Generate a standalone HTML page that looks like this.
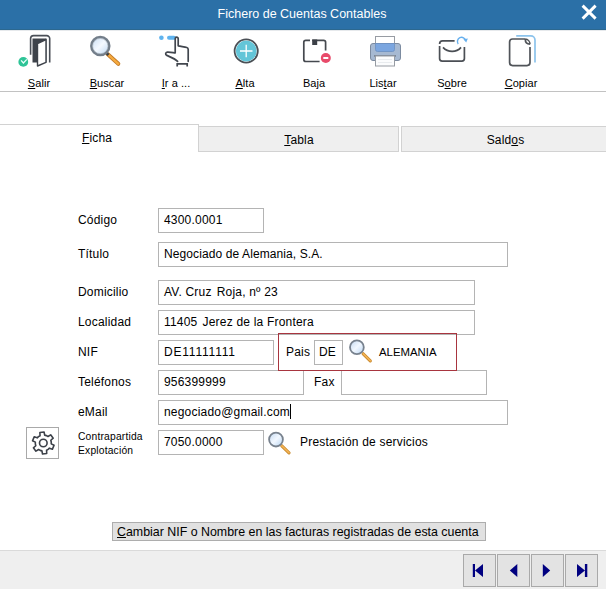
<!DOCTYPE html>
<html><head><meta charset="utf-8">
<style>
*{margin:0;padding:0;box-sizing:border-box}
html,body{width:606px;height:589px;overflow:hidden;background:#fff;font-family:"Liberation Sans",sans-serif;color:#000}
.a{position:absolute}
#title{left:0;top:0;width:606px;height:30px;background:#2b70a7;border-bottom:1px solid #2c6890;color:#fff;font-size:12.5px;text-align:center;line-height:28px;padding-right:2px}
#tb{left:0;top:30px;width:606px;height:62px;background:#fff;border-top:1px solid #e6e9ec;border-bottom:1px solid #c2c2c2}
.lbl{font-size:11px;text-align:center;width:70px;letter-spacing:0.05px}
u{text-decoration:underline;text-underline-offset:1px;text-decoration-thickness:1px}
.tab{font-size:12px;letter-spacing:0.15px;text-align:center;border:1px solid #d2d2d2;background:#efefef}
.fl{font-size:12px;left:78px;letter-spacing:0.2px}
.in{border:1px solid #b4b4b4;background:#fff;font-size:12px;letter-spacing:0.2px;padding-left:5px;line-height:22px;white-space:pre;overflow:hidden}
.nav{top:554px;width:33px;height:33px;background:#e3e3e3;border:1px solid #a9a9a9}
</style></head><body>
<div id="title" class="a">Fichero de Cuentas Contables</div>
<div class="a" style="left:581px;top:4px;width:16px;height:16px">
<svg width="16" height="16" viewBox="0 0 16 16"><path d="M1.6 1.6L14.6 14.6M14.6 1.6L1.6 14.6" stroke="#fff" stroke-width="2.9" stroke-linecap="butt"/></svg>
</div>
<div id="tb" class="a"></div>
<svg class="a" style="left:0;top:0" width="606" height="91" viewBox="0 0 606 91">
<!-- Salir door -->
<path d="M30.6 54.8V38.6a3 3 0 0 1 3-3H46.7a3 3 0 0 1 3 3V62.6" fill="none" stroke="#4a4f57" stroke-width="1.6"/>
<rect x="32.5" y="38.5" width="14" height="24" fill="#3e434b"/>
<path d="M37.5 43.5L46 39.5V62.3L37.5 66Z" fill="#fff" stroke="#3e434b" stroke-width="1.4" stroke-linejoin="round"/>
<circle cx="23.3" cy="61.9" r="4.9" fill="#2ec497"/>
<path d="M21.1 60.4L23.4 63L26.8 59.4" fill="none" stroke="#ecfffa" stroke-width="1.3"/>
<!-- Buscar magnifier -->
<defs><linearGradient id="lg" x1="0" y1="0" x2="1" y2="1"><stop offset="0" stop-color="#c7dcf4"/><stop offset="0.5" stop-color="#f4f9ff"/><stop offset="1" stop-color="#b9d5f2"/></linearGradient></defs>
<line x1="107.5" y1="54" x2="118.3" y2="63.8" stroke="#c27a28" stroke-width="4" stroke-linecap="round"/>
<line x1="107.5" y1="54" x2="118.3" y2="63.8" stroke="#f6ab3f" stroke-width="2.3" stroke-linecap="round"/>
<line x1="106.5" y1="53" x2="108.5" y2="55" stroke="#3a3f46" stroke-width="2.5"/>
<circle cx="100.3" cy="46.1" r="9" fill="url(#lg)" stroke="#737e8a" stroke-width="2.5"/>
<circle cx="100.3" cy="46.1" r="7.6" fill="none" stroke="#a9b3bd" stroke-width="0.6"/>
<!-- Ir a hand -->
<circle cx="161.4" cy="37.8" r="2.3" fill="#5fb3ee"/>
<line x1="169" y1="37.8" x2="174" y2="37.8" stroke="#5fb3ee" stroke-width="4" stroke-linecap="round"/>
<path d="M175.2 52.8V38.7a1.5 1.5 0 0 1 3 0V45.8C181 46.4 184.8 47 186.8 47.5Q188.2 47.9 188.2 49.5V61.3M175.2 52.8C173 52.6 169.5 52 167.3 52.2C165.4 52.5 165 54.6 166.8 55.4C170 56.8 175 58.6 177.6 61.3" fill="none" stroke="#41464e" stroke-width="1.7" stroke-linecap="round" stroke-linejoin="round"/>
<path d="M177.2 66.6V63.8H187.2V66.6" fill="none" stroke="#41464e" stroke-width="1.7"/>
<!-- Alta -->
<circle cx="246.2" cy="51" r="11.6" fill="#fff" stroke="#4a4f55" stroke-width="1.8"/>
<circle cx="246.2" cy="51" r="10.4" fill="#63c5d8"/>
<path d="M240 51H252.5M246.2 44.8V57.2" stroke="#fff" stroke-width="1.3"/>
<!-- Baja -->
<path d="M310 40.3H305.8a2 2 0 0 0-2 2V59.5a2 2 0 0 0 2 2H319.6M312.2 40.3H323.6a2 2 0 0 1 2 2V50.6" fill="none" stroke="#45494f" stroke-width="1.7"/>
<rect x="312.2" y="39.5" width="5" height="5.5" fill="#3c4047"/>
<circle cx="325.8" cy="58" r="5" fill="#e84a6a"/>
<rect x="323.3" y="57" width="5" height="2" fill="#fff"/>
<!-- Listar printer -->
<rect x="375.5" y="36.5" width="19" height="8" fill="#fff" stroke="#979ca3" stroke-width="1"/>
<rect x="370.5" y="43.5" width="30" height="17" rx="2.5" fill="#a6b9d2" stroke="#7c8ba0" stroke-width="1"/>
<path d="M375.5 43.5H394.5V49.5a2 2 0 0 1-2 2H377.5a2 2 0 0 1-2-2Z" fill="#7ba6e0" stroke="#6b8fc2" stroke-width="0.8"/>
<rect x="374" y="55" width="22" height="1.8" fill="#7a889b"/>
<rect x="375.5" y="56" width="19" height="10" fill="#fbfcfd" stroke="#979ca3" stroke-width="1"/>
<path d="M378 59.5H392M378 62.5H392" stroke="#e8ebee" stroke-width="1"/>
<!-- Sobre -->
<path d="M454.6 40.9H442.6a3 3 0 0 0-3 3M439.6 46V58.6a2.6 2.6 0 0 0 2.6 2.6H461.8a2.6 2.6 0 0 0 2.6-2.6V47" fill="none" stroke="#4b4f55" stroke-width="1.7"/>
<path d="M443 47.4c5 5.4 13.4 5.4 18 0" fill="none" stroke="#4b4f55" stroke-width="1.7"/>
<path d="M458.2 44a4.2 4.2 0 1 1 7.5-3.4" fill="none" stroke="#66b0ee" stroke-width="1.4"/>
<path d="M463.4 39.3L467.9 38.6L466.2 42.6Z" fill="#66b0ee"/>
<!-- Copiar -->
<path d="M516.2 35.9H530.8a4.2 4.2 0 0 1 4.2 4.2V62.4" fill="none" stroke="#8cc3ec" stroke-width="1.7"/>
<path d="M525.2 39H512.6a3 3 0 0 0-3 3V62.6a3 3 0 0 0 3 3H527a3 3 0 0 0 3-3V47" fill="none" stroke="#505459" stroke-width="1.7"/>
<path d="M525.2 39c0 3.2 1.6 5.1 4.8 5.3M525.2 39a5.3 5.3 0 0 1 4.8 5.3" fill="none" stroke="#505459" stroke-width="1.6"/>
</svg>

<!-- toolbar labels -->
<div class="a lbl" style="left:4px;top:77px"><u>S</u>alir</div>
<div class="a lbl" style="left:72px;top:77px"><u>B</u>uscar</div>
<div class="a lbl" style="left:141px;top:77px"><u>I</u>r a ...</div>
<div class="a lbl" style="left:210px;top:77px"><u>A</u>lta</div>
<div class="a lbl" style="left:279px;top:77px">Baja</div>
<div class="a lbl" style="left:348px;top:77px">Lis<u>t</u>ar</div>
<div class="a lbl" style="left:417px;top:77px">S<u>o</u>bre</div>
<div class="a lbl" style="left:486px;top:77px"><u>C</u>opiar</div>

<!-- tabs -->
<div class="a tab" style="left:-1px;width:200px;top:124px;height:28px;line-height:27px;background:#fff;border-bottom:none;padding-right:4px"><u>F</u>icha</div>
<div class="a tab" style="left:198px;width:201px;top:126px;height:26px;line-height:26px;padding-left:1px"><u>T</u>abla</div>
<div class="a tab" style="left:401px;width:207px;top:126px;height:26px;line-height:26px;padding-left:2px">Sald<u>o</u>s</div>

<!-- form -->
<div class="a fl" style="top:213px">Código</div>
<div class="a in" style="left:158px;top:208px;width:106px;height:25px">4300.0001</div>
<div class="a fl" style="top:247px">Título</div>
<div class="a in" style="left:158px;top:242px;width:350px;height:25px;letter-spacing:0.1px">Negociado de Alemania, S.A.</div>
<div class="a fl" style="top:285px">Domicilio</div>
<div class="a in" style="left:158px;top:280px;width:317px;height:25px">AV. Cruz <span style="margin-left:1.5px"></span>Roja, nº 23</div>
<div class="a fl" style="top:315px">Localidad</div>
<div class="a in" style="left:158px;top:310px;width:317px;height:25px">11405 <span style="margin-left:1.5px"></span>Jerez de la Frontera</div>
<div class="a fl" style="top:345px">NIF</div>
<div class="a in" style="left:158px;top:340px;width:116px;height:25px;letter-spacing:0.8px">DE11111111</div>
<div class="a fl" style="left:286px;top:345px">Pais</div>
<div class="a in" style="left:314px;top:340px;width:29px;height:25px;padding-left:4px">DE</div>
<div class="a fl" style="left:379px;top:345.6px;font-size:11.4px;letter-spacing:0">ALEMANIA</div>
<div class="a fl" style="top:375px">Teléfonos</div>
<div class="a in" style="left:158px;top:370px;width:146px;height:25px">956399999</div>
<div class="a fl" style="left:314px;top:375px">Fax</div>
<div class="a in" style="left:341px;top:370px;width:146px;height:25px"></div>
<div class="a" style="left:278px;top:333px;width:179px;height:38px;border:1px solid #a8353f"></div>
<div class="a fl" style="top:405px">eMail</div>
<div class="a in" style="left:158px;top:400px;width:350px;height:25px">negociado@gmail.com</div>
<div class="a" style="left:290px;top:404px;width:1px;height:15px;background:#000"></div>
<div class="a fl" style="top:429.5px;font-size:10.3px;line-height:14.3px;letter-spacing:0.18px">Contrapartida<br>Explotación</div>
<div class="a in" style="left:158px;top:430px;width:106px;height:25px">7050.0000</div>
<div class="a fl" style="left:300px;top:435px">Prestación de servicios</div>
<div class="a" style="left:26px;top:427px;width:33px;height:32px;border:1px solid #a9a9a9;background:#fff"></div>
<svg class="a" style="left:0;top:0" width="606" height="500" viewBox="0 0 606 500">
<defs><linearGradient id="lg2" x1="0" y1="0" x2="1" y2="1"><stop offset="0" stop-color="#c2d8f2"/><stop offset="0.5" stop-color="#f2f8ff"/><stop offset="1" stop-color="#b6d3f2"/></linearGradient></defs>
<line x1="363.2" y1="353.8" x2="370.3" y2="360.8" stroke="#c98a30" stroke-width="3.2" stroke-linecap="round"/>
<line x1="363.2" y1="353.8" x2="370.3" y2="360.8" stroke="#f5b555" stroke-width="1.6" stroke-linecap="round"/>
<circle cx="356.9" cy="347.3" r="6.9" fill="url(#lg2)" stroke="#78828e" stroke-width="1.8"/>
<line x1="281.8" y1="445.8" x2="289" y2="452.8" stroke="#c98a30" stroke-width="3.2" stroke-linecap="round"/>
<line x1="281.8" y1="445.8" x2="289" y2="452.8" stroke="#f5b555" stroke-width="1.6" stroke-linecap="round"/>
<circle cx="276" cy="439.6" r="6.9" fill="url(#lg2)" stroke="#78828e" stroke-width="1.8"/>
<g transform="translate(43.3 443)" fill="none" stroke="#3c4149" stroke-width="1.6" stroke-linejoin="round">
<path d="M-3.25 -7.31 L-3.40 -10.46 L0.77 -10.97 L1.39 -7.88 L3.13 -7.36 L4.70 -6.47 L7.36 -8.17 L9.89 -4.82 L7.52 -2.74 L7.94 -0.97 L7.96 0.84 L10.76 2.29 L9.12 6.15 L6.13 5.14 L4.81 6.39 L3.25 7.31 L3.40 10.46 L-0.77 10.97 L-1.39 7.88 L-3.13 7.36 L-4.70 6.47 L-7.36 8.17 L-9.89 4.82 L-7.52 2.74 L-7.94 0.97 L-7.96 -0.84 L-10.76 -2.29 L-9.12 -6.15 L-6.13 -5.14 L-4.81 -6.39Z"/>
<circle r="3.8"/>
</g>
</svg>

<!-- bottom button -->
<div class="a" style="left:112px;top:522px;width:374px;height:19px;background:#e1e1e1;border:1px solid #adadad;font-size:12.4px;line-height:19px;padding-left:4px;white-space:nowrap"><u>C</u>ambiar NIF o Nombre en las facturas registradas de esta cuenta</div>

<!-- footer -->
<div class="a" style="left:0;top:550px;width:606px;height:39px;background:#efefef;border-top:1px solid #dadada"></div>
<div class="a nav" style="left:463px"></div>
<div class="a nav" style="left:497px"></div>
<div class="a nav" style="left:531px"></div>
<div class="a nav" style="left:565px"></div>
<svg class="a" style="left:0;top:0" width="606" height="589" viewBox="0 0 606 589">
<path d="M472.8 564H475V577.1H472.8Z M475 570.5L483 564V577.1Z" fill="#000080"/>
<path d="M509.8 570.5L517.3 564V577.1Z" fill="#000080"/>
<path d="M550.2 570.5L542.8 564V577.1Z" fill="#000080"/>
<path d="M587.3 564H584.9V577.1H587.3Z M584.9 570.5L577 564V577.1Z" fill="#000080"/>
</svg>
</body></html>
